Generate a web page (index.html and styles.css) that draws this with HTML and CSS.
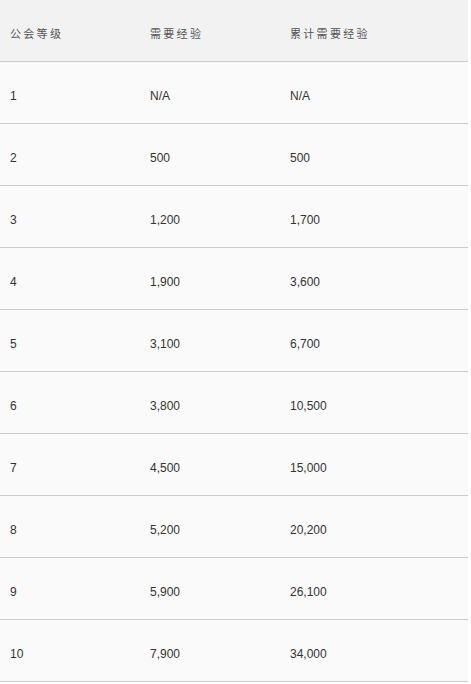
FILE: index.html
```
<!DOCTYPE html>
<html lang="zh">
<head>
<meta charset="utf-8">
<link rel="stylesheet" href="styles.css">
</head>
<body>
<table class="levels">
  <thead>
    <tr><th>公会等级</th><th>需要经验</th><th>累计需要经验</th></tr>
  </thead>
  <tbody>
    <tr><td>1</td><td>N/A</td><td>N/A</td></tr>
    <tr><td>2</td><td>500</td><td>500</td></tr>
    <tr><td>3</td><td>1,200</td><td>1,700</td></tr>
    <tr><td>4</td><td>1,900</td><td>3,600</td></tr>
    <tr><td>5</td><td>3,100</td><td>6,700</td></tr>
    <tr><td>6</td><td>3,800</td><td>10,500</td></tr>
    <tr><td>7</td><td>4,500</td><td>15,000</td></tr>
    <tr><td>8</td><td>5,200</td><td>20,200</td></tr>
    <tr><td>9</td><td>5,900</td><td>26,100</td></tr>
    <tr><td>10</td><td>7,900</td><td>34,000</td></tr>
  </tbody>
</table>
</body>
</html>
```
FILE: styles.css
```
html, body {
  margin: 0;
  padding: 0;
  background: #ffffff;
}
.levels {
  width: 468px;
  border-collapse: separate;
  border-spacing: 0;
  table-layout: fixed;
  font-family: "Liberation Sans", "Noto Sans CJK SC", sans-serif;
}
.levels th, .levels td {
  width: 140px;
  text-align: left;
  vertical-align: top;
  box-sizing: border-box;
  height: 62px;
  border-bottom: 1px solid #cccccc;
  padding: 0 10px;
}
.levels th:last-child, .levels td:last-child {
  width: 188px;
}
.levels th {
  background: #f2f2f2;
  font-weight: normal;
  font-size: 11px;
  letter-spacing: 2.3px;
  color: #555555;
  line-height: 18px;
  padding-top: 25px;
}
.levels td {
  background: #fafafa;
  font-size: 12px;
  color: #333333;
  line-height: 18px;
  padding-top: 25px;
}
```
